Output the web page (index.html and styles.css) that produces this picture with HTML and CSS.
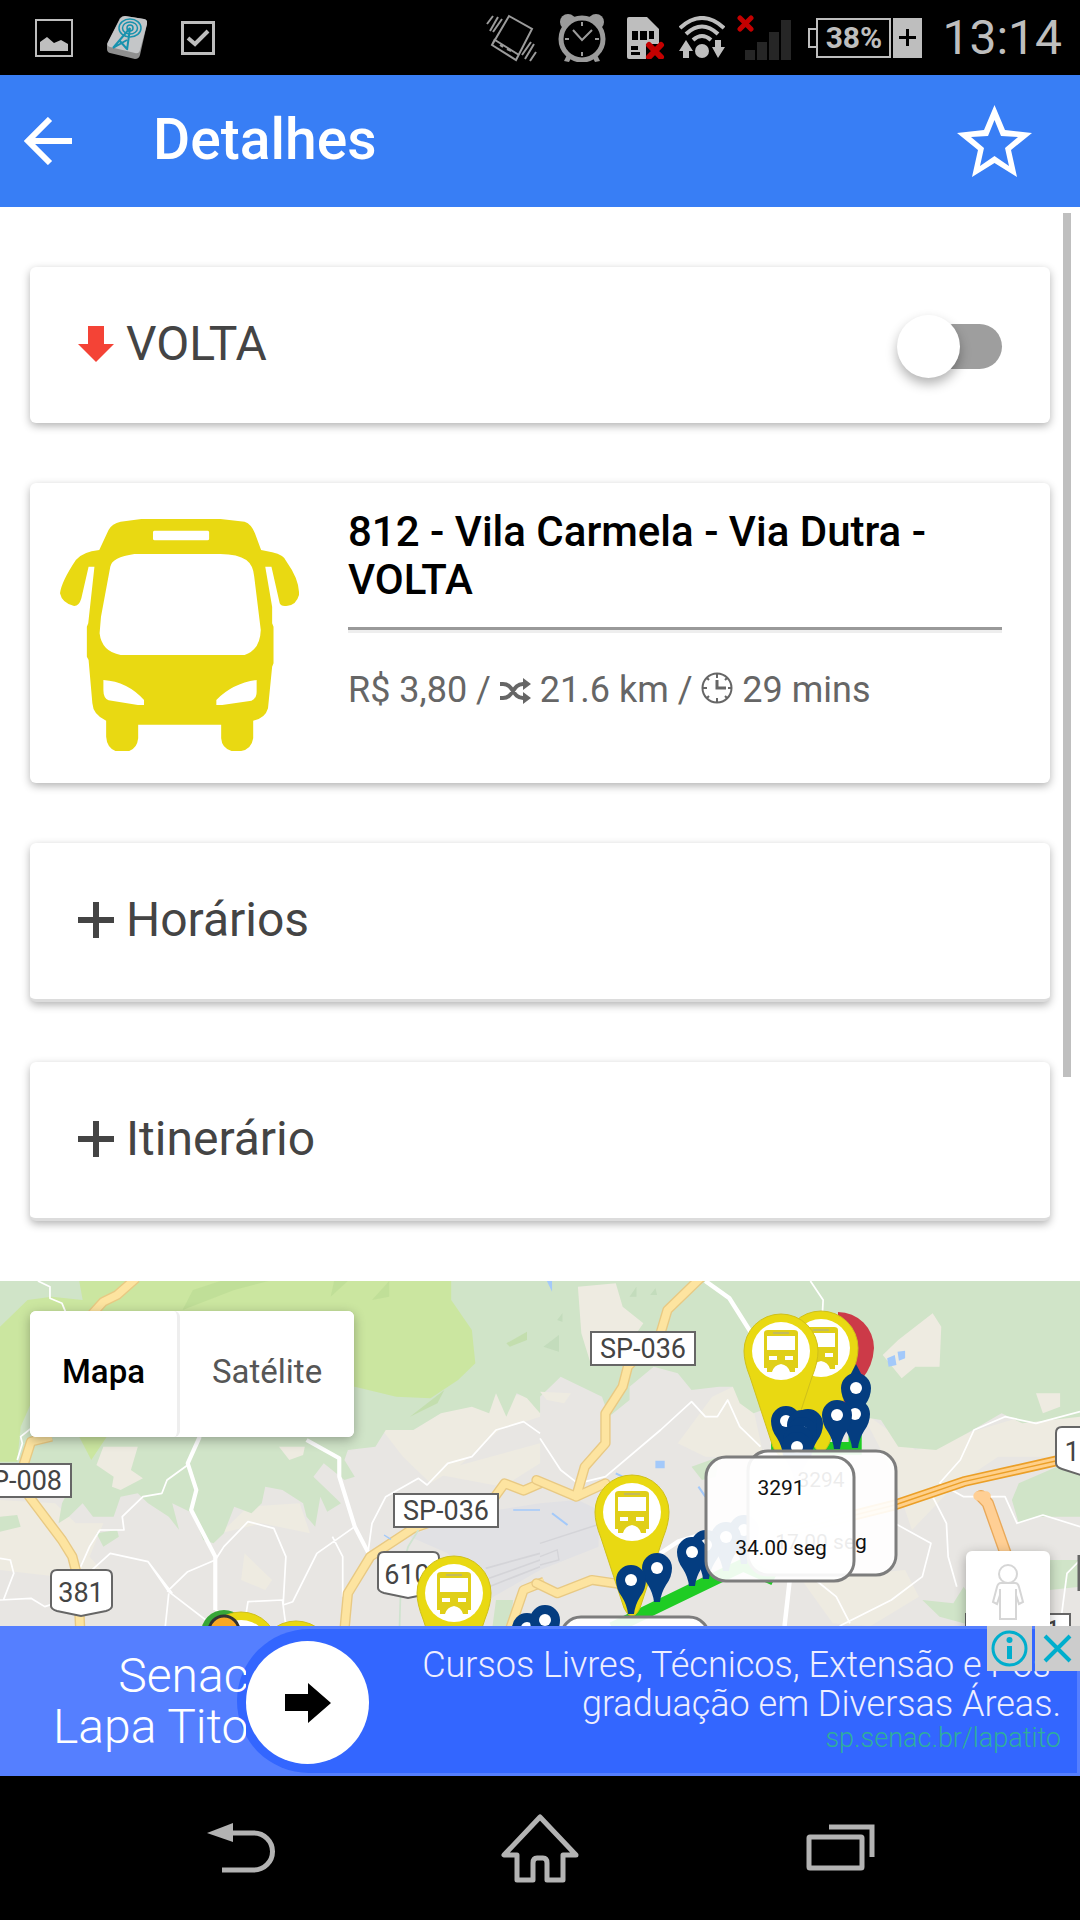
FILE: index.html
```html
<!DOCTYPE html>
<html lang="pt-BR">
<head>
<meta charset="utf-8">
<meta name="viewport" content="width=device-width, initial-scale=1">
<title>Detalhes</title>
<link rel="stylesheet" href="styles.css">
</head>
<body>
<div class="statusbar">
  <div class="status-left">
    <svg width="38" height="38" viewBox="0 0 38 38"><rect x="1" y="1" width="36" height="36" fill="none" stroke="#bebebe" stroke-width="2"/><path d="M5 32V23l7-5 7 6 7-3 7 4v7z" fill="#bebebe"/></svg>
    <svg width="40" height="44" viewBox="0 0 40 44"><path d="M13 2q2-2 5-2l19 3q4 1 3 5l-7 31q-1 4-5 4L3 37q-3-1-3-4v-5z" fill="#8e8e8e"/><path d="M13 3q2-3 5-3l19 3q4 1 3 5l-7 26q-1 4-5 3L3 31q-4-1-2-5z" fill="#c4c6c8"/><g fill="none" stroke="#1792ae" stroke-width="1.5"><ellipse cx="23" cy="12" rx="11" ry="9"/><ellipse cx="23" cy="12" rx="7.500" ry="6"/><circle cx="23" cy="12" r="3"/><path stroke-width="2" d="M23 12 6 32M23 12l-3 22M12 24l8 9M20 24 6 32"/></g></svg>
    <svg width="34" height="34" viewBox="0 0 34 34"><rect x="1.500" y="1.500" width="31" height="31" fill="none" stroke="#bebebe" stroke-width="3"/><path d="M7 17l7 6L27 10" fill="none" stroke="#bebebe" stroke-width="4"/></svg>
  </div>
  <div class="status-right">
    <svg class="vibrate" width="51" height="48" viewBox="0 0 51 48" fill="none" stroke="#9b9b9b" stroke-width="2"><path d="M23 2 46 15 30 46 6 31zM9 26l24 15M6 31l3-6M14 31l3 2M21 35l4 2"/><path d="M7 2 1 10M12 3 4 17M16 5 7 18M50 38l-6 9M48 30l-9 15M45 28 36 41"/></svg>
    <svg class="alarm" width="48" height="48" viewBox="0 0 48 48"><g fill="#9b9b9b"><circle cx="10" cy="8" r="8"/><circle cx="38" cy="8" r="8"/><path d="M6 47l4-8 4 3-3 6zM42 47l-4-8-4 3 3 6z"/></g><circle cx="24" cy="25" r="21" fill="#000" stroke="#9b9b9b" stroke-width="5"/><path d="M15 16l9 10 10-10M24 8v4M24 38v4M7 25h4M37 25h4" fill="none" stroke="#9b9b9b" stroke-width="2"/></svg>
    <svg class="sim" width="38" height="42" viewBox="0 0 38 42"><path d="M0 2q0-2 2-2h18l12 12v28q0 2-2 2H2q-2 0-2-2z" fill="#bebebe"/><path d="M5 14h6v9H5zM13 14h7v9h-7zM22 14h5v8h-5zM4 29h7v4H4zM4 35h9v3H4z" fill="#000"/><path d="M19 27h18v15H19z" fill="#000"/><path d="m22 28 12 12M34 28 22 40" stroke="#c40000" stroke-width="6" stroke-linecap="round"/></svg>
    <svg class="wifi" width="46" height="43" viewBox="0 0 46 43"><g fill="none" stroke="#bebebe" stroke-width="4"><path d="M1 12Q23-8 45 12M7 18Q23 3 39 18M14 24Q23 16 32 24"/></g><circle cx="23" cy="35" r="7" fill="#bebebe"/><path d="M7 24l7 11h-4v7H4v-7H0zM39 42l-6-11h3v-7h6v7h4z" fill="#bebebe"/></svg>
    <svg class="signal" width="54" height="46" viewBox="0 0 54 46"><path d="M8 35h10v10H8zM20 27h10v18H20zM32 17h10v28H32zM44 5h10v40H44z" fill="#262626"/><path d="m3 3 11 11M14 3 3 14" stroke="#c40000" stroke-width="5" stroke-linecap="round"/></svg>
    <div class="battery">
      <span class="battery-nub"></span>
      <span class="battery-level">38%</span>
      <svg width="29" height="40" viewBox="0 0 29 40"><path fill="#bebebe" d="M0 0h29v40H0z"/><path d="M14.500 11v17M6 19.500h17" stroke="#000" stroke-width="3"/></svg>
    </div>
    <span class="clock">13:14</span>
  </div>
</div>

<header class="appbar">
  <button class="icon-button" type="button" aria-label="Voltar"><svg width="48" height="48" viewBox="0 0 48 48" fill="none" stroke="#fff" stroke-width="6"><path d="M26 2 4 24l22 22M4 24h44"/></svg></button>
  <h1 class="title">Detalhes</h1>
  <button class="icon-button" type="button" aria-label="Favorito"><svg width="75" height="72" viewBox="0 0 75 72"><path fill="#fff" fill-rule="evenodd" d="M37.500 0 48 25 75 28 54 45 60 72 37.500 58 15 72 21 45 0 28 27 25zM37.500 15 31 31 14 32 27 43 23 61 37.500 51 52 61 48 43 61 32 44 31z"/></svg></button>
</header>

<main class="content">
  <div class="scrollbar"></div>
  <div class="cards">
    <section class="card card-row">
      <svg width="36" height="36" viewBox="0 0 36 36"><path d="M10 0h16v18h10L18 36 0 18h10z" fill="#f44336"/></svg>
      <label class="row-label" for="direction">VOLTA</label>
      <input class="toggle" id="direction" type="checkbox">
    </section>

    <section class="card line-card">
      <svg class="bus" viewBox="174 147 694 696" preserveAspectRatio="none"><path fill="#e9d912" fill-rule="evenodd" d="M288 240 315 180Q325 160 350 155L410 147H640L710 155Q730 162 740 190L758 240 790 247Q825 255 832 275 870 330 868 375 860 405 835 407 815 410 812 400L788 290H770L790 410V460L794 470V580L790 590 778 715Q770 745 735 752V805Q730 838 700 843H672Q644 835 642 805V764H401V805Q398 835 375 843H335Q310 832 308 800V752Q270 735 268 700L257 570 252 560V470L256 460 274 290H257L236 385Q230 408 215 408 180 400 174 370 178 335 220 270 240 245 288 240ZM390 252H640Q690 252 715 270 735 285 738 320L757 480Q755 540 710 555H350Q295 545 289 490L293 440 320 290Q325 262 390 252ZM448 182H603Q607 182 607 187V206Q607 211 602 211H449Q444 211 444 206V187Q444 182 448 182ZM300 630Q370 635 418 690V705H400L315 691Q300 685 300 660ZM745 630Q675 640 628 690V705H645L730 692Q745 685 745 665Z"/></svg>
      <div class="line-info">
        <h2 class="line-name">812 - Vila Carmela - Via Dutra - VOLTA</h2>
        <hr class="rule">
        <p class="line-facts">R$ 3,80 / <svg width="31" height="26" viewBox="0 0 31 26"><path d="M0 6h3c11 0 9 14 20 14h1M0 20h3c11 0 9-14 20-14h1" fill="none" stroke="#666" stroke-width="4"/><path d="M23 0 31 6 23 12zM23 14l8 6-8 6z" fill="#666"/></svg> 21.6 km / <svg width="32" height="32" viewBox="0 0 32 32" fill="none" stroke="#666" stroke-width="2"><circle cx="16" cy="16" r="14.500"/><path d="M16 8v8h9" stroke-width="3"/><path d="M16 2v4M16 26v4M2 16h4M27 16h3M6 6l2 2M24 24l2 2M6 26l2-2M24 8l2-2"/></svg> 29 mins</p>
      </div>
    </section>

    <button class="card card-row card-button" type="button"><svg width="36" height="36" viewBox="0 0 36 36"><path d="M15 0h6v15h15v6H21v15h-6V21H0v-6h15z" fill="#444"/></svg><span class="row-label">Horários</span></button>
    <button class="card card-row card-button" type="button"><svg width="36" height="36" viewBox="0 0 36 36"><path d="M15 0h6v15h15v6H21v15h-6V21H0v-6h15z" fill="#444"/></svg><span class="row-label">Itinerário</span></button>
  </div>

  <section class="map" aria-label="Mapa">
    <svg class="map-canvas" viewBox="0 0 1080 345" preserveAspectRatio="xMidYMin slice">
      <defs>
        <g id="bus-pin">
          <path d="M-37 0A37 37 0 0 1 37 0Q37 11 31 26L8 96Q0 112-8 96L-31 26Q-37 11-37 0Z" fill="#e9d912" stroke="#cfc01a" stroke-width="1"/>
          <circle r="29" fill="#fff"/>
          <path fill="#e0cf18" fill-rule="evenodd" d="M-17-18Q-17-21-13-21H13Q17-21 17-18V17H14V21H9Q7 14 0 13-7 14-9 21H-14V17H-17ZM-14-15V-1H14V-15ZM-12 5V9H-4V5ZM12 5V9H4V5Z"/>
          <path d="M-8-18H8" stroke="#c3ba5a" stroke-width="2"/>
        </g>
        <path id="stop-body" d="M-15 0A15 15 0 0 1 15 0Q15 9 9 17 4 25 3 34H-3Q-4 25-9 17-15 9-15 0Z" fill="#043d80"/>
        <g id="stop-pin"><use href="#stop-body"/><circle r="6" fill="#fff"/></g>
        <g id="bubble"><rect width="148" height="124" rx="20" fill="#fff" fill-opacity=".92" stroke="#7d7d7d" stroke-width="3"/></g>
      </defs>
      <rect width="1080" height="345" fill="#e8e6e3"/>

      <!-- western half of the map -->
      <g transform="matrix(.34444 0 0 .33333 0 -11)">
        <path fill="#eeebe1" d="M0 690 160 700 220 760 300 760 260 860 330 940 0 900ZM1110 480 1200 480 1280 430 1430 370 1568 380V440L1450 480 1330 590 1250 640 1170 560ZM640 790 720 710 870 700 900 790 760 760ZM710 850 790 930 770 960 700 930ZM1250 610 1568 520V580L1460 650Z"/>
        <path fill="#d0e4c8" d="M0 33H1568V430L1530 385 1500 370 1470 440 1440 370 1420 430 1370 410 1280 430 1200 480 1120 480 1090 530 1010 540 1000 570 1030 620 1000 630 940 580 910 620 990 700 950 725 930 680 915 770 890 740 880 700 820 660 770 650 760 700 730 730 680 710 650 790 620 820 590 810 560 730 500 700 520 780 490 740 430 700 400 670 350 680 330 740 270 740 240 700 200 740 170 760 180 700 210 640 190 600 140 580 0 600ZM0 740 50 735 60 770 0 785ZM280 790 340 780 345 800 300 830ZM1440 990 1490 990 1480 1068H1430Z"/>
        <path fill="#eeebe1" d="M300 530 400 530 380 600 415 625 350 660 325 650 330 620 280 585ZM810 530H885L880 555 840 570Z"/>
        <path fill="#cbe6a0" d="M0 170 80 90 150 80 240 90 230 33H1310V90L1370 180 1380 280 1330 330 1250 385 1150 380 1030 350 500 300 90 400 60 470 50 575H0ZM230 500H310L265 570Z"/>
        <path fill="#b4d78f" fill-opacity=".45" d="M530 120 560 60 640 33H780L680 60ZM960 80 1010 33H970ZM1080 90 1130 33V80ZM1470 220 1530 185V210L1480 230ZM1190 440 1290 360 1270 400Z"/>
        <path fill="#e1e1e4" d="M1190 800 1320 740 1568 700V900L1400 1000 1300 850Z"/>
        <path d="M1410 895 1568 850M1420 950 1568 890M1420 925 1568 870" fill="none" stroke="#d4d4d8" stroke-width="5"/>
        <g fill="none" stroke="#fff" stroke-linejoin="round">
          <path stroke-width="12" d="M580 500 545 580 570 660 555 720 625 860V1020M890 510 985 565V620L1030 770 1075 860"/>
          <path stroke-width="5" d="M110 33 145 50V85L180 100 190 125M545 585 485 630 470 670 415 680 355 740 360 780 290 780 260 830 230 900M0 990 90 985 130 1010 160 1000 320 850 430 875 490 965 620 1068M430 875 500 970M485 965 545 905 625 870 650 830 720 755 795 775 830 860 822 1005 850 995 920 850 1030 770M965 800 995 860V980M1068 850 1080 760 1120 680 1215 625 1240 645 1300 580 1370 560 1440 480 1520 455 1568 490M480 1068 490 970M625 1020 710 1060 720 995 820 990 830 1068M0 865 30 870 40 910 10 990M90 475 60 500 65 520 50 570"/>
        </g>
        <g fill="none" stroke-linejoin="round">
          <path stroke="#e8c983" stroke-width="30" d="M395 25 340 75 300 95 265 135M150 500 90 515 70 580 85 680 180 810 210 860 225 920 233 1080M1580 635 1520 662 1465 640 1430 690 1200 775 1075 860 1010 970 1000 1080M1580 935 1520 960 1480 1080"/>
          <path stroke="#fde4a0" stroke-width="22" d="M395 25 340 75 300 95 265 135M150 500 90 515 70 580 85 680 180 810 210 860 225 920 233 1080M1580 635 1520 662 1465 640 1430 690 1200 775 1075 860 1010 970 1000 1080M1580 935 1520 960 1480 1080"/>
        </g>
        <path d="M1490 720H1568M1115 795 1135 808" stroke="#a3c9fa" stroke-width="4"/>
        <path d="M1215 780 1185 830 1165 900 1160 1068" fill="none" stroke="#cfe3cf" stroke-width="5"/>
      </g>

      <!-- eastern half of the map -->
      <g transform="matrix(.34444 0 0 .33333 540 -11)">
        <path fill="#eeebe1" d="M400 520 500 380 560 350 620 420 650 560 480 560ZM930 420 1090 540 1240 490 1400 440 1568 430V560L1330 560 1200 650 1080 780 1020 600ZM760 930 1060 900 1100 980 960 1068 850 1060Z"/>
        <path fill="#d0e4c8" d="M0 33H1568V440L1400 460 1340 430 1240 490 1150 540 1040 530 990 450 700 400 620 430 580 400 560 350 520 350 440 360 400 310 330 290 260 350 260 390 200 440 180 380 120 350 60 320 0 380ZM1390 640 1568 560V740L1440 740 1390 760 1370 690ZM1110 990 1200 1000 1230 950 1260 1000V1068L1160 1040ZM1480 870 1568 870V950L1480 960ZM440 590 520 560 510 620 470 630Z"/>
        <path fill="#eeebe1" d="M110 50 220 40 240 110 300 160 280 190 150 290 120 190ZM1040 210 1140 130 1165 170 1160 290 1090 290 1050 325 995 255ZM1440 370 1510 370V410L1460 430ZM0 365 90 370 70 400 20 390Z"/>
        <path fill="#e1e1e4" d="M0 700 110 690 170 720 170 830 0 900Z"/>
        <path d="M0 820 165 765M0 885 55 870 50 840 0 860" fill="none" stroke="#d4d4d8" stroke-width="4"/>
        <path fill="#b5d3b0" fill-opacity=".5" d="M10 230 55 195V245ZM260 80 280 50V80ZM50 150 65 130V155ZM320 75 335 55 340 75Z"/>
        <path d="M1008 265 1030 255 1035 285 1012 290ZM1038 245 1060 242 1060 265 1042 272ZM335 572H362V595H335ZM20 33H35V65Z" fill="#a3c9fa"/>
        <path d="M35 730 80 765M460 650 480 680M220 610 250 625" stroke="#a3c9fa" stroke-width="6"/>
        <g fill="none" stroke="#fff" stroke-linejoin="round">
          <path stroke-width="13" d="M480 33 550 85 620 200M350 850 400 815 480 790M725 930 710 1068"/>
          <path stroke-width="5" d="M785 33 822 90 820 130M0 505 60 600 110 640 190 620 350 480 440 395 480 440 515 440 545 390 580 470 640 530M1160 640 1220 570 1260 480 1350 440 1440 460 1568 425M1160 640 1230 680 1350 680 1385 760 1460 735 1568 770M1140 680 1180 760 1185 860 1210 950M1030 760 1135 820 1110 920 1020 990 870 1068M800 930 860 980 900 1060M1568 870 1530 910 1510 1068"/>
        </g>
        <g fill="none" stroke-linejoin="round" stroke-linecap="round">
          <path stroke="#e8c983" stroke-width="30" d="M465 25 370 120 350 190 255 290 240 350 190 430 190 520 130 590 105 680 -10 630M105 680 190 640M-10 940 50 970 150 930 230 942"/>
          <path stroke="#fde4a0" stroke-width="22" d="M465 25 370 120 350 190 255 290 240 350 190 430 190 520 130 590 105 680 -10 630M105 680 190 640M-10 940 50 970 150 930 230 942"/>
          <path stroke="#e9a95a" stroke-width="36" d="M1280 678 1300 700 1355 860"/>
          <path stroke="#ffcf94" stroke-width="28" d="M1280 678 1300 700 1355 860M1272 678H1295"/>
          <path stroke="#eb9f27" stroke-width="32" d="M700 790 1030 705 1230 635 1510 570"/>
          <path stroke="#ffd08a" stroke-width="22" d="M700 790 1030 705 1230 635 1510 570"/>
          <path stroke="#eb9f27" stroke-width="4" d="M700 790 1030 705 1230 635 1510 570"/>
        </g>
        <path d="M210 1075 530 915 590 885 680 928M690 545V535H915V480" fill="none" stroke="#1fcc24" stroke-width="38"/>
      </g>

      <!-- road shields -->
      <g fill="#fff" stroke="#666" stroke-width="2">
        <rect x="591" y="51" width="104" height="33"/>
        <rect x="394" y="213" width="104" height="33"/>
        <rect x="-34" y="183" width="105" height="33"/>
        <rect x="966" y="333" width="104" height="33"/>
        <path d="M57 289H106Q112 289 112 295V325Q112 328 106 330L81 335 57 330Q51 328 51 325V295Q51 289 57 289ZM384 271H433Q439 271 439 277V307Q439 310 433 312L408 317 384 312Q378 310 378 307V277Q378 271 384 271ZM1062 146H1100V200L1062 188Q1056 186 1056 182V152Q1056 146 1062 146Z"/>
        <path d="M1079 274V310" stroke-width="3"/>
      </g>
      <g class="shield-text">
        <text x="643" y="77">SP-036</text>
        <text x="446" y="239">SP-036</text>
        <text x="19" y="209">SP-008</text>
        <text x="81" y="321">381</text>
        <text x="407" y="303">610</text>
        <text x="1072" y="180">1</text>
        <text x="1053" y="359">1</text>
      </g>

      <!-- bus positions and stops -->
      <path d="M838 31A36 36 0 0 1 874 67Q873 85 862 98L838 150Z" fill="#cc3a48"/>
      <use href="#bus-pin" x="821" y="67"/>
      <use href="#bus-pin" x="781" y="70"/>
      <use href="#bus-pin" x="632" y="231"/>
      <use href="#bus-pin" x="454" y="312"/>
      <use href="#bus-pin" x="296" y="377"/>
      <circle cx="224" cy="352" r="23" fill="#37a637"/>
      <use href="#bus-pin" x="241" y="368"/>
      <circle cx="224" cy="350" r="15" fill="#f9a825" stroke="#333" stroke-width="3"/>
      <path d="M856 83 868 106H844Z" fill="#043d80"/>
      <use href="#stop-pin" x="856" y="107"/>
      <use href="#stop-pin" x="855" y="133"/>
      <use href="#stop-pin" x="837" y="134"/>
      <use href="#stop-pin" x="786" y="140"/>
      <use href="#stop-body" x="808" y="143"/>
      <use href="#stop-body" x="802" y="144"/>
      <use href="#stop-pin" x="802" y="151"/>
      <use href="#stop-body" x="798" y="159"/>
      <use href="#stop-pin" x="797" y="166"/>
      <use href="#stop-pin" x="744" y="249"/>
      <use href="#stop-pin" x="726" y="256"/>
      <use href="#stop-pin" x="706" y="264"/>
      <use href="#stop-pin" x="692" y="271"/>
      <use href="#stop-pin" x="657" y="287"/>
      <use href="#stop-pin" x="631" y="299"/>
      <use href="#stop-pin" x="527" y="347"/>
      <use href="#stop-pin" x="545" y="339"/>
      <g class="bubble-text">
        <use href="#bubble" x="561" y="336"/>
        <use href="#bubble" x="748" y="170"/>
        <text x="821" y="206">3294</text>
        <text x="821" y="268">17.00 seg</text>
        <use href="#bubble" x="706" y="176"/>
        <text x="781" y="214">3291</text>
        <text x="781" y="274">34.00 seg</text>
      </g>
    </svg>

    <div class="map-type">
      <button class="map-type-button is-active" type="button">Mapa</button>
      <button class="map-type-button" type="button">Satélite</button>
    </div>
    <button class="pegman" type="button" aria-label="Street View"><svg width="34" height="60" viewBox="0 0 34 60" fill="#fff" stroke="#d6d6d6" stroke-width="2"><path d="M10 20H24Q27 20 28 24L32 39 28 41 25 32V56H9V32L6 41 2 39 6 24Q7 20 10 20ZM9 32V26M25 32V26"/><circle cx="17" cy="11" r="9"/></svg></button>
  </section>
</main>

<aside class="ad">
  <div class="ad-brand"><p class="ad-name">Senac<br>Lapa Tito</p></div>
  <div class="ad-panel">
    <button class="ad-go" type="button" aria-label="Abrir anúncio"><svg width="46" height="40" viewBox="0 0 46 40"><path d="M0 11h23V0l23 20-23 20V28H0z" fill="#000"/></svg></button>
    <div class="ad-copy">
      <p class="ad-text">Cursos Livres, Técnicos, Extensão e Pós-graduação em Diversas Áreas.</p>
      <a class="ad-link" href="#">sp.senac.br/lapatito</a>
    </div>
  </div>
  <div class="ad-controls">
    <button class="ad-control" type="button" aria-label="Informações"><svg width="37" height="37" viewBox="0 0 37 37"><circle cx="18.500" cy="18.500" r="16.500" fill="none" stroke="#00aecd" stroke-width="3"/><circle cx="18.500" cy="10" r="3" fill="#00aecd"/><path d="M16 16h5v13h-5z" fill="#00aecd"/></svg></button>
    <button class="ad-control" type="button" aria-label="Fechar"><svg width="29" height="29" viewBox="0 0 29 29"><path d="m2 2 25 25M27 2 2 27" stroke="#00aecd" stroke-width="4"/></svg></button>
  </div>
</aside>

<nav class="navbar">
  <button class="icon-button" type="button" aria-label="Voltar"><svg width="78" height="70" viewBox="0 0 78 70"><path d="M28 20H52A18 18 0 0 1 52 57H20" fill="none" stroke="#b3b3b3" stroke-width="5"/><path d="M5 20 31 10V29z" fill="#b3b3b3"/></svg></button>
  <button class="icon-button" type="button" aria-label="Início"><svg width="78" height="70" viewBox="0 0 78 70" fill="none" stroke="#b3b3b3" stroke-width="5" stroke-linejoin="round"><path d="M39 4 3 42H16V67H32V50Q32 45 36 45H42Q46 45 46 50V67H62V42H75Z"/></svg></button>
  <button class="icon-button" type="button" aria-label="Recentes"><svg width="78" height="70" viewBox="0 0 78 70" fill="none" stroke="#b3b3b3" stroke-width="5"><rect x="9" y="24" width="53" height="31" rx="1"/><path d="M29 14H72V44"/></svg></button>
</nav>
</body>
</html>
```
FILE: styles.css
```css
* {
  box-sizing: border-box;
}

body {
  margin: 0;
  min-height: 100vh;
  display: flex;
  flex-direction: column;
  background: #000;
  font-family: Roboto, "Liberation Sans", sans-serif;
}

svg {
  display: block;
  flex: none;
}

button {
  font: inherit;
  border: 0;
  padding: 0;
  background: none;
  cursor: pointer;
}

/* System status bar */
.statusbar {
  display: flex;
  justify-content: space-between;
  align-items: center;
  height: 75px;
  padding: 0 18px 0 35px;
  background: #000;
  color: #bebebe;
}

.status-left {
  display: flex;
  align-items: center;
  gap: 34px;
}

.status-right {
  display: flex;
  align-items: center;
}

.alarm,
.sim {
  margin-left: 21px;
}

.wifi {
  margin-left: 14px;
}

.signal {
  margin-left: 12px;
}

.battery {
  display: flex;
  align-items: center;
  margin: 0 20px 0 17px;
}

.battery-nub {
  width: 8px;
  height: 20px;
  border: 2px solid #bebebe;
  border-right: 0;
}

.battery-level {
  width: 75px;
  height: 40px;
  margin-right: 2px;
  border: 2px solid #bebebe;
  font-size: 30px;
  font-weight: 700;
  line-height: 36px;
  text-align: center;
}

.clock {
  font-size: 48px;
  line-height: 56px;
}

/* Application bar */
.appbar {
  display: flex;
  align-items: center;
  height: 132px;
  padding: 0 48px 0 24px;
  background: #387ef5;
}

.title {
  flex: 1;
  margin: 0 0 2px 81px;
  color: #fff;
  font-size: 57px;
  font-weight: 500;
  line-height: 64px;
}

/* Scrolling content */
.content {
  position: relative;
  flex: 1;
  display: flex;
  flex-direction: column;
  background: #fff;
}

.scrollbar {
  position: absolute;
  top: 6px;
  right: 9px;
  width: 8px;
  height: 864px;
  background: #bfbfbf;
}

.cards {
  display: flex;
  flex-direction: column;
  gap: 60px;
  padding: 60px 30px;
}

.card {
  border-radius: 6px;
  background: #fff;
  box-shadow: 0 3px 9px rgba(0, 0, 0, 0.3);
}

.card-row {
  display: flex;
  align-items: center;
  gap: 12px;
  min-height: 156px;
  padding: 0 48px 3px;
}

.card-button {
  min-height: 159px;
  border-bottom: 3px solid #dcdcdc;
}

.row-label {
  color: #444;
  font-size: 48px;
  line-height: 56px;
}

.toggle {
  appearance: none;
  position: relative;
  width: 102px;
  height: 45px;
  margin: 6px 0 0 auto;
  border-radius: 23px;
  background: #9e9e9e;
}

.toggle::before {
  content: "";
  position: absolute;
  top: -9px;
  left: -3px;
  width: 63px;
  height: 63px;
  border-radius: 50%;
  background: #fff;
  box-shadow: 0 6px 12px rgba(0, 0, 0, 0.3);
}

.toggle:checked {
  background: #387ef5;
}

.toggle:checked::before {
  left: 42px;
}

.line-card {
  display: grid;
  grid-template-columns: 240px 1fr;
  gap: 48px;
  padding: 0 48px 0 30px;
}

.bus {
  width: 239px;
  height: 232px;
  margin: 36px 0 32px;
}

.line-info {
  padding-top: 25px;
}

.line-name {
  margin: 0;
  color: #000;
  font-size: 42px;
  font-weight: 500;
  line-height: 48px;
}

.rule {
  height: 6px;
  margin: 23px 0 37px;
  border: 0;
  border-top: 3px solid #999;
  border-bottom: 3px solid #eee;
}

.line-facts {
  margin: 0;
  color: #666;
  font-size: 36px;
  line-height: 40px;
}

.line-facts svg {
  display: inline-block;
  vertical-align: -2px;
}

/* Map */
.map {
  position: relative;
  flex: 1 0 345px;
  overflow: hidden;
  background: #e8e6e3;
}

.map-canvas {
  position: absolute;
  inset: 0;
  width: 100%;
  height: 100%;
}

.shield-text {
  fill: #444;
  font-size: 27px;
  text-anchor: middle;
}

.bubble-text {
  fill: #111;
  font-size: 21px;
  text-anchor: middle;
}

.map-type {
  position: absolute;
  top: 30px;
  left: 30px;
  display: flex;
  border-radius: 6px;
  background: #fff;
  box-shadow: 0 3px 12px rgba(0, 0, 0, 0.3);
}

.map-type-button {
  height: 126px;
  padding: 0 32px 4px;
  border-radius: 6px;
  background: #fff;
  color: #565656;
  font-size: 33px;
  line-height: 40px;
}

.map-type-button.is-active {
  border-right: 3px solid #eee;
  color: #000;
  font-weight: 500;
}

.pegman {
  position: absolute;
  top: 270px;
  right: 30px;
  display: grid;
  place-items: center;
  width: 84px;
  height: 84px;
  border-radius: 6px;
  background: #fff;
  box-shadow: 0 3px 12px rgba(0, 0, 0, 0.3);
}

/* Advertisement */
.ad {
  position: relative;
  display: flex;
  height: 150px;
  padding: 3px 3px 3px 0;
  background: #557fff;
}

.ad-brand {
  position: absolute;
  z-index: 1;
  top: 24px;
  left: 0;
  width: 246px;
  padding-left: 53px;
  overflow: hidden;
}

.ad-name {
  width: max-content;
  margin: 0;
  color: #fff;
  font-size: 48px;
  font-weight: 300;
  line-height: 51px;
  text-align: right;
}

.ad-panel {
  flex: 1;
  display: flex;
  justify-content: space-between;
  margin-left: 237px;
  padding: 0 16px 0 9px;
  border-radius: 72px 0 0 72px;
  background: #3366ff;
}

.ad-go {
  flex: none;
  display: grid;
  place-items: center;
  align-self: flex-end;
  width: 123px;
  height: 123px;
  margin-bottom: 9px;
  border-radius: 50%;
  background: #fff;
}

.ad-copy {
  max-width: 660px;
  padding-top: 17px;
  font-weight: 300;
  text-align: right;
}

.ad-text {
  margin: 0;
  color: #eef;
  font-size: 36px;
  line-height: 39px;
}

.ad-link {
  display: block;
  color: #2fae9b;
  font-size: 27px;
  line-height: 28px;
  text-decoration: none;
}

.ad-controls {
  position: absolute;
  top: 0;
  right: 0;
  display: flex;
  gap: 3px;
}

.ad-control {
  display: grid;
  place-items: center;
  width: 45px;
  height: 45px;
  background: #ccc;
}

/* System navigation bar */
.navbar {
  display: flex;
  justify-content: space-between;
  align-items: center;
  height: 144px;
  padding: 0 202px;
  background: #000;
}
```
